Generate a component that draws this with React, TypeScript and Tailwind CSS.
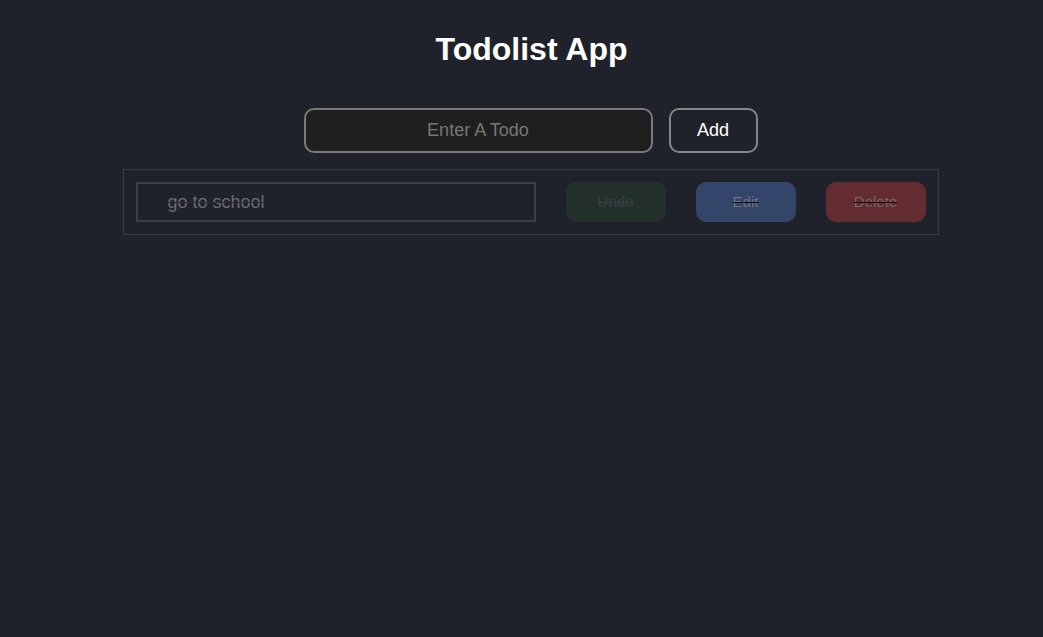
import { useState } from "react";

type Todo = { id: number; text: string; done: boolean };

export default function App() {
	const [todos] = useState<Todo[]>([{ id: 1, text: "go to school", done: true }]);

	return (
		<div className="min-h-[637px] w-full bg-[#1f222b] font-['Liberation_Sans',Arial,sans-serif]">
			<div className="flex flex-col items-center pl-[18px]">
				{/* Title */}
				<h1 className="mt-[31px] pl-[2px] text-[32px] font-bold leading-[37px] text-white">
					Todolist App
				</h1>

				{/* New todo form */}
				<form className="mt-[40px] flex gap-4" onSubmit={(e) => e.preventDefault()}>
					<input
						className="h-[45px] w-[349px] rounded-[10px] border-2 border-[#7a7a7a] bg-[#1f1f1f] text-center text-[18px] text-white outline-none placeholder:text-[#777]"
						placeholder="Enter A Todo"
					/>
					<button
						className="h-[45px] w-[89px] rounded-[10px] border-2 border-[#858585] bg-transparent text-[18px] text-white"
						type="submit"
					>
						Add
					</button>
				</form>

				{/* Todo list */}
				<div className="mt-4 flex w-[816px] flex-col">
					{todos.map((todo) => (
						<div
							className="flex items-center border border-[#3a3d45] py-3 pr-[11px] pl-3"
							key={todo.id}
						>
							<input
								className="h-10 w-[400px] border-2 border-[#3c3f47] bg-transparent pl-[30px] text-[18px] text-[#6a6c72] line-through decoration-[#2a2c30] outline-none"
								readOnly
								value={todo.text}
							/>
							<div className="ml-[30px] flex gap-[30px]">
								<button className="h-10 w-[100px] rounded-[10px] bg-[#223029] text-[15px] text-[#3a3e44] line-through">
									Undo
								</button>
								<button className="h-10 w-[100px] rounded-[10px] bg-[#33466a] text-[15px] text-[#6b7282] line-through decoration-[#111]">
									Edit
								</button>
								<button className="h-10 w-[100px] rounded-[10px] bg-[#632c30] text-[15px] text-[#7c6264] line-through decoration-[#111]">
									Delete
								</button>
							</div>
						</div>
					))}
				</div>
			</div>
		</div>
	);
}
